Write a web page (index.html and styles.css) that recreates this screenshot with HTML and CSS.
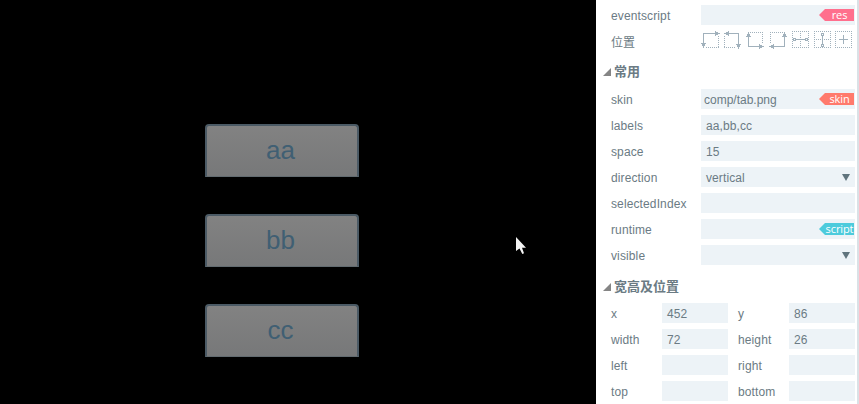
FILE: index.html
```html
<!DOCTYPE html>
<html lang="zh">
<head>
<meta charset="utf-8">
<title>Tab</title>
<link rel="stylesheet" href="styles.css">
</head>
<body>
<main class="stage">
  <div class="tab">aa</div>
  <div class="tab">bb</div>
  <div class="tab">cc</div>
  <svg class="cursor" width="12" height="20" viewBox="0 0 12 20"><path d="M0 0V14L3.5 11.5L6.3 17L8 16.3L6 10.7H10Z" fill="#f4f4f4"/></svg>
</main>
<aside class="panel">
  <div class="row"><span class="label">eventscript</span><div class="field"><span class="tag res">res</span></div></div>
  <div class="row"><span class="label cjk">位置</span>
    <div class="anchors">
      <svg viewBox="0 0 23 18"><path class="dots" d="M5 16.5H18M17.5 5V17"/><path class="line" d="M2.5 13V2.5H15"/><path class="fill" d="M14 0L19 2.5L14 5ZM0 12H5L2.5 17Z"/></svg>
      <svg viewBox="0 0 22 18"><path class="dots" d="M0 16.5H12M.5 5V17"/><path class="line" d="M4 2.5H14.5V13"/><path class="fill" d="M5 0L0 2.5L5 5ZM12 13H17L14.5 18Z"/></svg>
      <svg viewBox="0 0 23 18"><path class="dots" d="M4 1.5H17M16.5 1V13"/><path class="line" d="M2.5 5V15.5H14"/><path class="fill" d="M0 6L2.5 1L5 6ZM13 13L18 15.5L13 18Z"/></svg>
      <svg viewBox="0 0 23 18"><path class="dots" d="M1 1.5H14M1.5 1V13"/><path class="line" d="M15.5 5V15.5H4"/><path class="fill" d="M13 6L15.5 1L18 6ZM5 13L0 15.5L5 18Z"/></svg>
      <svg viewBox="0 0 22 18"><path class="dots" d="M0 .5H17M0 16.5H17M.5 0V17M16.5 0V17M8.5 0V17"/><path class="line" d="M4 8.5H13M1.5 7.5H3.5V9.5H1.5ZM13.5 7.5H15.5V9.5H13.5Z"/></svg>
      <svg viewBox="0 0 21 18"><path class="dots" d="M0 .5H17M0 16.5H17M.5 0V17M16.5 0V17M0 8.5H17"/><path class="line" d="M8.5 4V13M7.5 2.5H9.5V4.5H7.5ZM7.5 13.5H9.5V15.5H7.5Z"/></svg>
      <svg viewBox="0 0 20 18"><path class="dots" d="M0 .5H17M0 16.5H17M.5 0V17M16.5 0V17"/><path class="line" d="M4 8.5H13M8.5 4V13"/></svg>
    </div>
  </div>
  <h2 class="heading">常用</h2>
  <div class="row"><span class="label">skin</span><div class="field tight">comp/tab.png<span class="tag skin">skin</span></div></div>
  <div class="row"><span class="label">labels</span><div class="field">aa,bb,cc</div></div>
  <div class="row"><span class="label">space</span><div class="field">15</div></div>
  <div class="row"><span class="label">direction</span><div class="field">vertical<i class="arrow"></i></div></div>
  <div class="row"><span class="label">selectedIndex</span><div class="field"></div></div>
  <div class="row"><span class="label">runtime</span><div class="field"><span class="tag script">script</span></div></div>
  <div class="row"><span class="label">visible</span><div class="field"><i class="arrow"></i></div></div>
  <h2 class="heading second">宽高及位置</h2>
  <div class="row pair"><span class="label">x</span><div class="field">452</div><span class="label">y</span><div class="field">86</div></div>
  <div class="row pair"><span class="label">width</span><div class="field">72</div><span class="label">height</span><div class="field">26</div></div>
  <div class="row pair"><span class="label">left</span><div class="field"></div><span class="label">right</span><div class="field"></div></div>
  <div class="row pair"><span class="label">top</span><div class="field"></div><span class="label">bottom</span><div class="field"></div></div>
</aside>
</body>
</html>
```
FILE: styles.css
```css
* { box-sizing: border-box; }
body {
  margin: 0;
  width: 859px;
  height: 404px;
  overflow: hidden;
  display: flex;
  background: #000;
  color: #6b7b84;
  font: 12px/20px "Liberation Sans", "Noto Sans CJK SC", sans-serif;
}
.stage {
  position: relative;
  width: 596px;
  padding: 124px 0 0 205px;
  display: flex;
  flex-direction: column;
  gap: 37px;
}
.tab {
  width: 154px;
  height: 53px;
  flex: none;
  border: 2px solid #4b5a65;
  border-bottom: 1px solid #626b70;
  border-radius: 4px 4px 0 0;
  background: linear-gradient(#828282, #777879);
  color: #405f73;
  font-size: 26px;
  line-height: 49px;
  text-align: center;
  padding-right: 3px;
}
.cursor { position: absolute; left: 516px; top: 237px; }
.panel {
  width: 263px;
  height: 404px;
  overflow: hidden;
  padding: 5px 2px 0 15px;
  background: #fff;
  border-right: 2px solid #dae1e6;
}
.row {
  display: grid;
  grid-template-columns: 90px 154px;
  height: 20px;
  margin-bottom: 6px;
}
.pair { grid-template-columns: 51px 66px 10px 51px 66px; }
.pair .label:nth-child(3) { grid-column: 4; }
.label { padding-top: 1px; letter-spacing: .12px; white-space: nowrap; }
.cjk { padding-top: 2px; letter-spacing: 0; }
.field {
  display: flex;
  align-items: center;
  height: 20px;
  padding: 2px 1px 0 5px;
  background: #edf3f7;
  letter-spacing: .1px;
}
.field.tight { padding-left: 3px; letter-spacing: 0; }
.tag {
  width: 35px;
  height: 12px;
  margin: -2px 0 0 auto;
  padding-left: 6px;
  clip-path: polygon(0 50%, 6px 0, 100% 0, 100% 100%, 6px 100%);
  color: #fff;
  font: 11px/12px "Open Sans", sans-serif;
  letter-spacing: -.1px;
  text-align: center;
}
.res { background: #ff6f8d; }
.skin { background: #ff7a6c; }
.script { background: #4dcbdc; }
.arrow {
  margin: -2px 4px 0 auto;
  border: 4px solid transparent;
  border-top: 7px solid #60747d;
  border-bottom: 0;
}
.anchors {
  display: grid;
  grid-template-columns: 23px 22px 23px 23px 22px 21px 20px;
}
.anchors svg { width: 100%; height: 18px; shape-rendering: crispEdges; }
.line, .dots { fill: none; stroke: #a1b1bc; stroke-width: 1; }
.dots { stroke-dasharray: 1 1; }
.fill { fill: #a1b1bc; }
.heading {
  display: flex;
  align-items: center;
  gap: 3px;
  height: 20px;
  margin: 11px 0 7px -8px;
  font-size: 13px;
  line-height: 20px;
}
.heading::before {
  content: "";
  width: 8px;
  height: 8px;
  background: #858585;
  clip-path: polygon(100% 0, 100% 100%, 0 100%);
}
.second { margin: 12px 0 6px -8px; }
```
